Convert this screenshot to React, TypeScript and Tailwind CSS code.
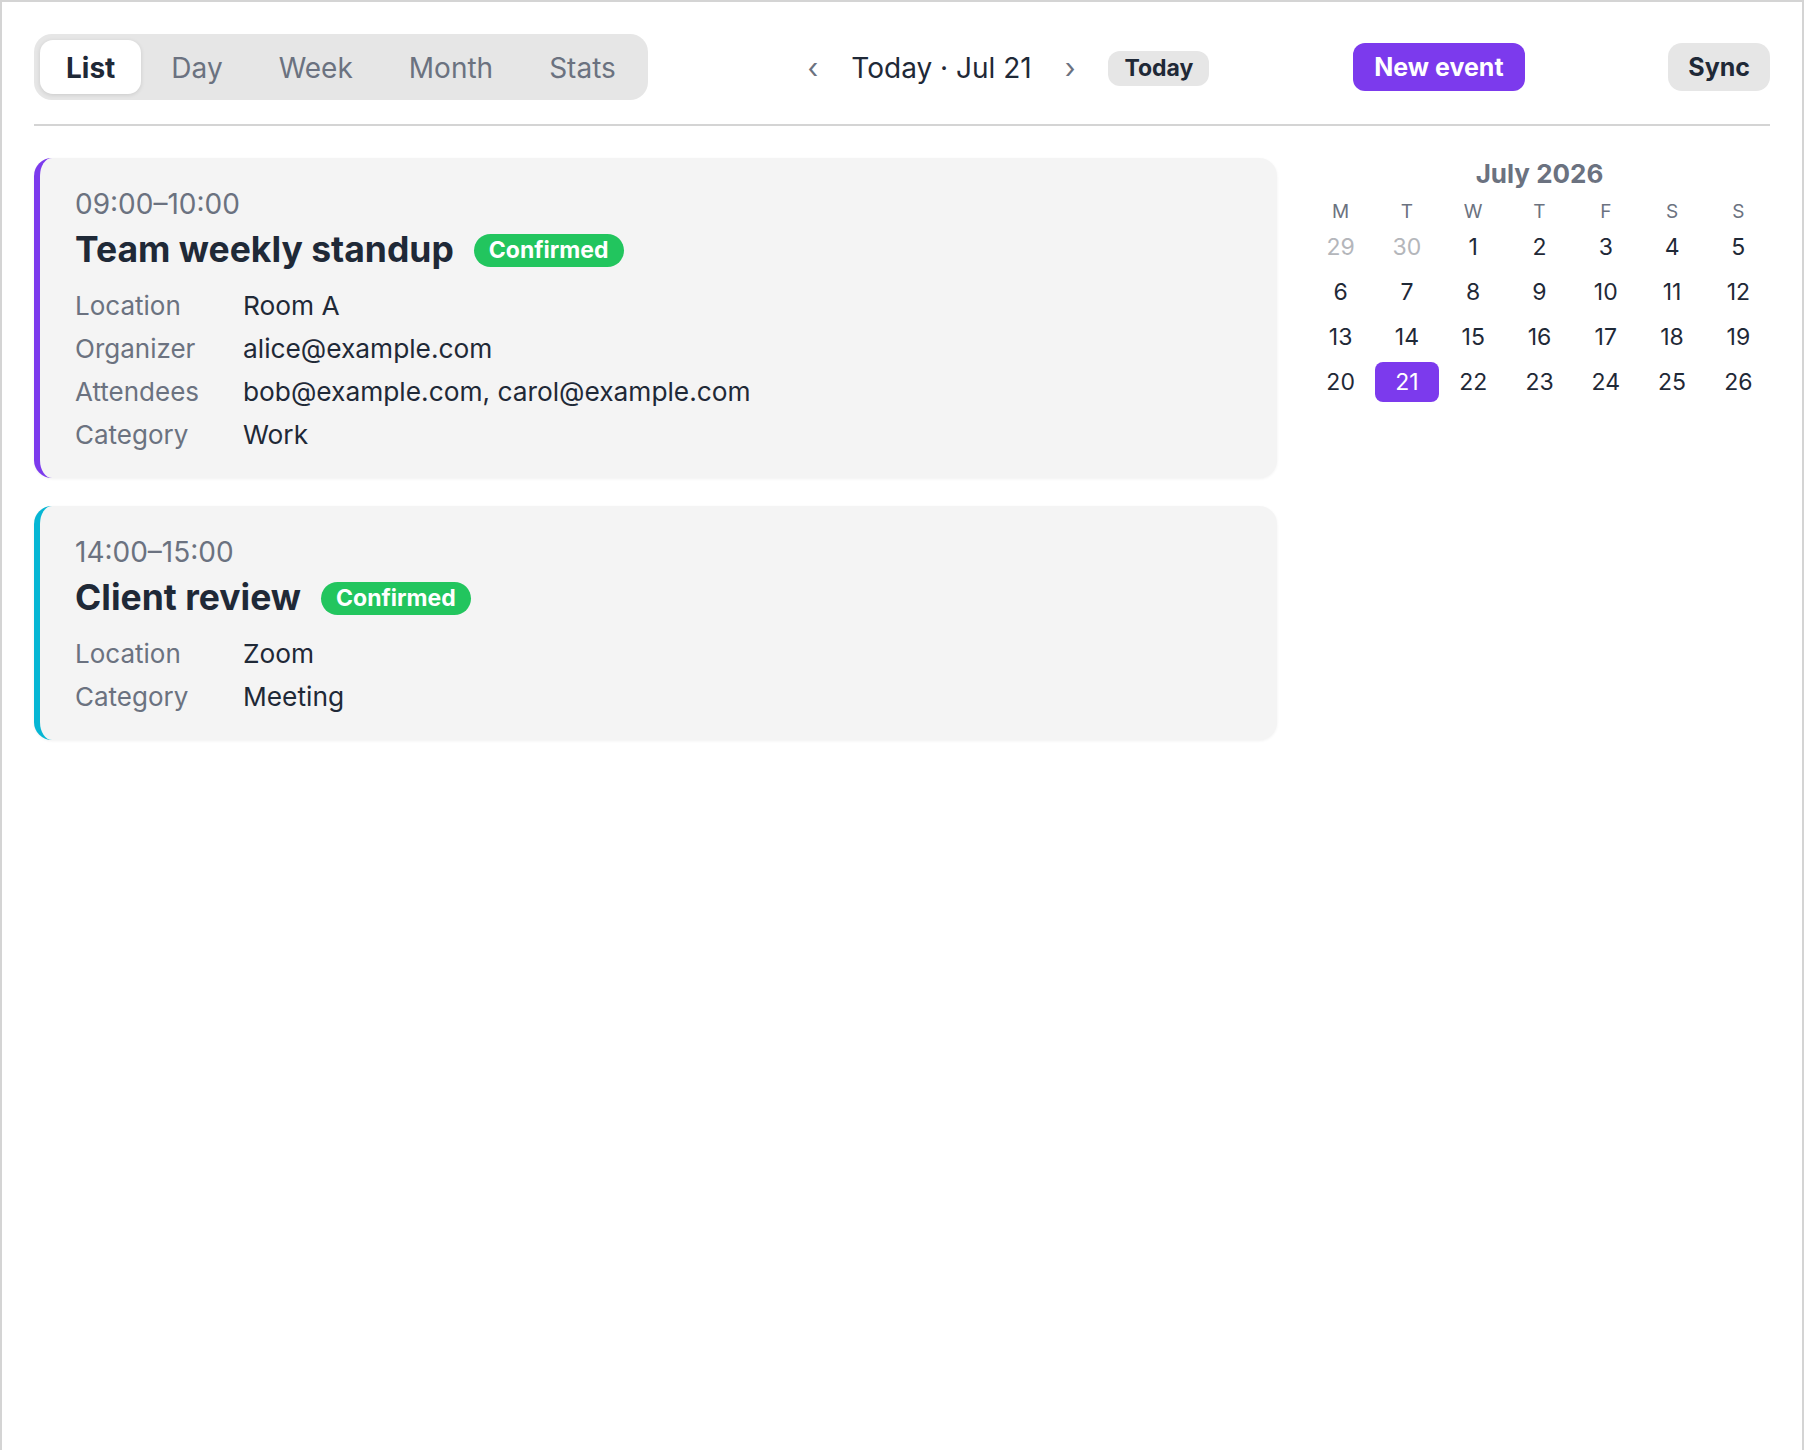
import { useState } from "react";

type Field = { label: string; value: string };

type CalEvent = {
  id: string;
  time: string;
  title: string;
  status: string;
  accent: string;
  fields: Field[];
};

const views = ["List", "Day", "Week", "Month", "Stats"];

const events: CalEvent[] = [
  {
    id: "standup",
    time: "09:00–10:00",
    title: "Team weekly standup",
    status: "Confirmed",
    accent: "border-l-[#7c3aed]",
    fields: [
      { label: "Location", value: "Room A" },
      { label: "Organizer", value: "alice@example.com" },
      { label: "Attendees", value: "bob@example.com, carol@example.com" },
      { label: "Category", value: "Work" },
    ],
  },
  {
    id: "client",
    time: "14:00–15:00",
    title: "Client review",
    status: "Confirmed",
    accent: "border-l-[#06b6d4]",
    fields: [
      { label: "Location", value: "Zoom" },
      { label: "Category", value: "Meeting" },
    ],
  },
];

const weekdays = ["M", "T", "W", "T", "F", "S", "S"];

// July 2026 starts on a Wednesday; the two leading cells belong to June
const days: { n: number; muted?: boolean }[] = [
  { n: 29, muted: true },
  { n: 30, muted: true },
  ...Array.from({ length: 26 }, (_, i) => ({ n: i + 1 })),
];

function ViewTabs() {
  const [active, setActive] = useState("List");
  return (
    <div className="flex items-center gap-[4px] rounded-[18px] bg-[#e6e6e6] p-[6px]">
      {views.map((v) => (
        <button
          key={v}
          onClick={() => setActive(v)}
          className={
            v === active
              ? "flex h-[54px] items-center rounded-[13px] bg-white px-[26px] pt-[2px] text-[28px] font-bold text-[#1f2937] shadow-[0_1px_4px_rgba(0,0,0,0.12)]"
              : "flex h-[54px] items-center rounded-[13px] px-[26px] pt-[2px] text-[28px] text-[#6b7280]"
          }
        >
          {v}
        </button>
      ))}
    </div>
  );
}

function DateNav() {
  return (
    <div className="flex items-center gap-[17px] pt-[2px]">
      <button className="px-4 text-[28px] leading-none text-[#6b7280]">‹</button>
      <span className="text-[28px] text-[#1f2937]">Today · Jul 21</span>
      <button className="px-4 text-[28px] leading-none text-[#6b7280]">›</button>
      <button className="flex h-[35px] items-center rounded-[12px] bg-[#e6e6e6] px-4 text-[23px] font-bold text-[#1f2937]">
        Today
      </button>
    </div>
  );
}

function EventCard({ ev }: { ev: CalEvent }) {
  return (
    <article
      className={`rounded-[18px] border-l-[6px] ${ev.accent} bg-[#f4f4f4] pb-[22px] pl-[35px] pr-8 pt-[28px] shadow-[0_1px_3px_rgba(0,0,0,0.06)]`}
    >
      <div className="text-[28px] leading-[36px] text-[#6b7280]">{ev.time}</div>
      <div className="mt-[6px] flex items-center gap-5">
        <h3 className="text-[35.5px] font-bold leading-[44px] text-[#1f2937]">{ev.title}</h3>
        <span className="flex h-[33px] items-center rounded-full bg-[#22c55e] px-[15px] text-[23px] font-bold text-white">
          {ev.status}
        </span>
      </div>
      <dl className="mt-[12px] grid grid-cols-[168px_1fr] text-[26px] leading-[43px]">
        {ev.fields.map((f) => (
          <div key={f.label} className="contents">
            <dt className="text-[#6b7280]">{f.label}</dt>
            <dd className="text-[26.3px] text-[#1f2937]">{f.value}</dd>
          </div>
        ))}
      </dl>
    </article>
  );
}

function MiniMonth() {
  return (
    <aside className="w-[461px] shrink-0">
      <div className="text-center text-[26px] font-bold leading-[32px] text-[#6b7280]">July 2026</div>
      <div className="mt-[8px] grid grid-cols-7 gap-x-[3px] text-center text-[19px] leading-[28px] text-[#6b7280]">
        {weekdays.map((d, i) => (
          <div key={i}>{d}</div>
        ))}
      </div>
      <div className="mt-[1px] grid grid-cols-7 gap-x-[3px] gap-y-[5px]">
        {days.map((d) => (
          <div
            key={`${d.muted ? "p" : "c"}${d.n}`}
            className={
              d.n === 21 && !d.muted
                ? "flex h-10 items-center justify-center rounded-[8px] bg-[#7c3aed] text-[23px] text-white"
                : d.muted
                  ? "flex h-10 items-center justify-center text-[23px] text-[#b4b6bb]"
                  : "flex h-10 items-center justify-center text-[23px] text-[#1f2937]"
            }
          >
            {d.n}
          </div>
        ))}
      </div>
    </aside>
  );
}

export default function App() {
  return (
    <div className="min-h-[1460px] border-x-2 border-t-2 border-[#d4d4d4] bg-white p-8 font-['Inter','Liberation_Sans',sans-serif]">
      <header className="flex items-center justify-between border-b-2 border-[#d4d4d4] pb-6">
        <ViewTabs />
        <DateNav />
        <button className="flex h-12 items-center rounded-[12px] bg-[#7c3aed] px-[21px] pt-[2px] text-[25px] font-bold text-white">
          New event
        </button>
        <button className="flex h-12 items-center rounded-[14px] bg-[#e6e6e6] px-5 pt-[2px] text-[25px] font-bold text-[#1f2937]">
          Sync
        </button>
      </header>

      <main className="mt-8 flex items-start gap-8">
        <section className="flex flex-1 flex-col gap-7">
          {events.map((ev) => (
            <EventCard key={ev.id} ev={ev} />
          ))}
        </section>
        <MiniMonth />
      </main>
    </div>
  );
}
